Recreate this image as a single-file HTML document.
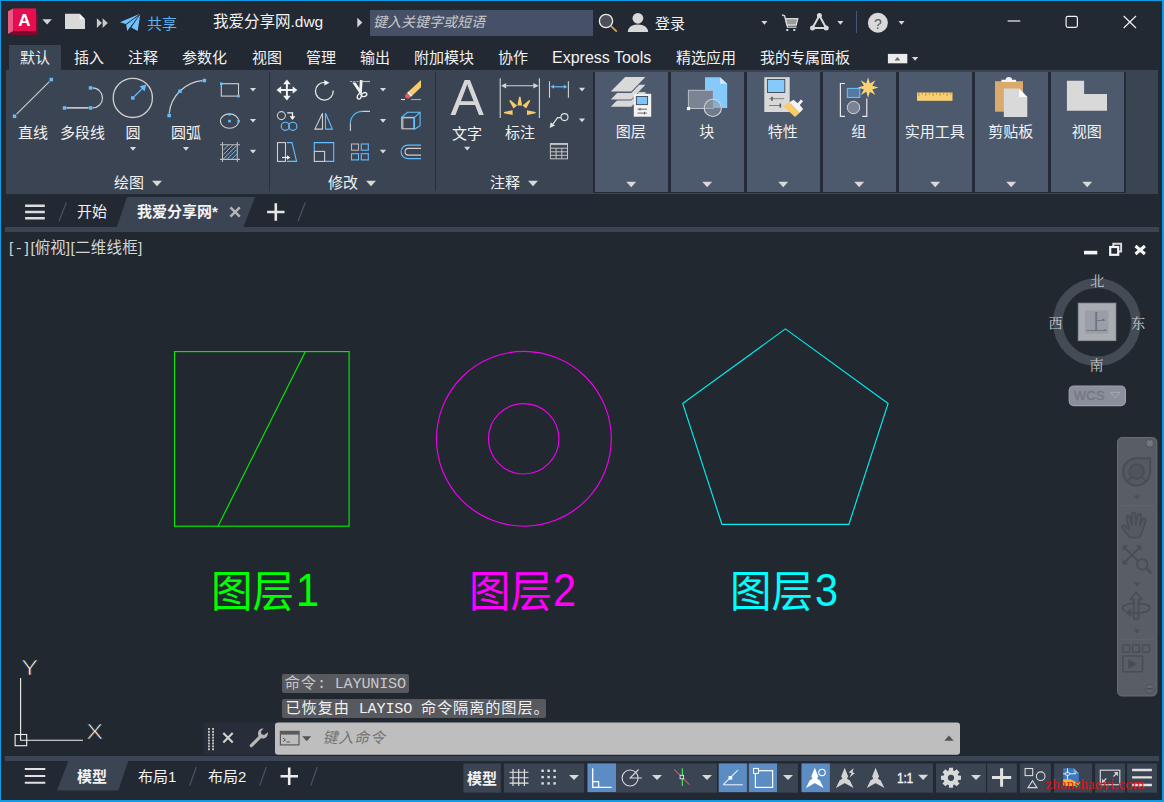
<!DOCTYPE html>
<html lang="zh-CN">
<head>
<meta charset="utf-8">
<title>我爱分享网.dwg</title>
<style>
*{box-sizing:border-box;margin:0;padding:0}
html,body{width:1164px;height:802px;overflow:hidden;background:#222933}
body{position:relative;font-family:"Liberation Sans","Noto Sans CJK SC",sans-serif;font-size:15px;color:#f2f2f2;line-height:1}
.abs{position:absolute}
.t{position:absolute;white-space:nowrap;line-height:20px;height:20px}
#frame{position:absolute;left:0;top:0;width:1164px;height:802px;border:1px solid #0f9be3;border-right-width:2px;border-bottom-width:2px;z-index:50;pointer-events:none}
#ribbon{left:6px;top:70px;width:1152px;height:124px;background:#3b4453}
#pdark{left:593px;top:72px;width:532.5px;height:120.500px;background:#252b36}
#tabact{left:9px;top:45px;width:52px;height:26px;background:#3b4453}
.cp{position:absolute;top:72px;width:73.300px;height:119.700px;background:#4d596d}
.cp .l{position:absolute;left:-1px;width:100%;top:50px;text-align:center;line-height:20px}
.sep{position:absolute;top:72px;width:1px;height:119px;background:#2a303b}
#search{left:370px;top:10px;width:223px;height:26px;background:#465066}
#draw{left:2px;top:232px;width:1161px;height:524px;background:#212830}
#strip1{left:5px;top:227px;width:1154px;height:5px;background:#3b4453}
#strip2{left:5px;top:756px;width:1154px;height:5px;background:#3b4453}
.big{top:568px;height:50px;line-height:50px;font-size:41.5px;transform:scaleY(1.03);transform-origin:0 50%}
.dig{font-family:"Liberation Sans",sans-serif;font-size:46px !important;transform:scaleX(0.9) !important;transform-origin:0 50% !important;top:565px !important}
.cjs{font-family:"Liberation Serif","Noto Serif CJK SC",serif;font-size:14px;color:#c8c8c8}
.vl{top:238px;font-size:15.500px;color:#d4d4d4}
.hl{padding:0 0 0 2.700px;background:#57595e;border-radius:2px;font-size:15.200px;letter-spacing:0.900px;overflow:hidden}
.la{letter-spacing:-0.230px}
.mono{font-family:"Liberation Mono","Noto Sans Mono CJK SC","Noto Sans CJK SC",monospace}
#svg{position:absolute;left:0;top:0;z-index:10}
.z20{z-index:20}
</style>
</head>
<body>
<!-- backgrounds -->
<div class="abs" id="tabact"></div>
<div class="abs" id="ribbon"></div>
<div class="abs" id="pdark"></div>
<div class="abs" id="search"></div>
<div class="abs" id="strip1"></div>
<div class="abs" id="draw"></div>
<div class="abs" id="strip2"></div>

<div class="sep" style="left:269px"></div><div class="sep" style="left:435px"></div>
<!-- collapsed panels -->
<div class="cp" style="left:595px"><span class="l">图层</span></div>
<div class="cp" style="left:671px"><span class="l">块</span></div>
<div class="cp" style="left:747px"><span class="l">特性</span></div>
<div class="cp" style="left:823px"><span class="l">组</span></div>
<div class="cp" style="left:899px"><span class="l">实用工具</span></div>
<div class="cp" style="left:975px"><span class="l">剪贴板</span></div>
<div class="cp" style="left:1051px"><span class="l">视图</span></div>

<!-- SVG-ICONS -->
<svg id="svg" width="1164" height="802" viewBox="0 0 1164 802">
<!-- ICONS-START -->
<!-- drawing entities -->
<g fill="none" stroke-width="1.15">
<rect x="174.5" y="351.6" width="174.6" height="174.6" stroke="#00ee00"/>
<line x1="305.4" y1="351.6" x2="218" y2="526.2" stroke="#00ee00"/>
<circle cx="523.9" cy="438.8" r="87.4" stroke="#f000f0"/>
<circle cx="523.7" cy="438.8" r="35.2" stroke="#f000f0"/>
<polygon points="785.4,328.9 888.1,403.5 848.9,524.3 721.9,524.3 682.7,403.5" stroke="#00eeee"/>
</g>
<!-- UCS icon -->
<g fill="none" stroke="#f0f0f0" stroke-width="1.1">
<path d="M20.6 678v62.3H83"/>
<rect x="15.1" y="734.5" width="11.6" height="11.2"/>
</g>
<text transform="translate(21.200 674.500) scale(1.150 1)" font-family="Liberation Sans, sans-serif" font-size="22" fill="#f0f0f0" stroke="#212830" stroke-width="0.600">Y</text>
<text transform="translate(86.300 738.700) scale(1.150 1)" font-family="Liberation Sans, sans-serif" font-size="22" fill="#f0f0f0" stroke="#212830" stroke-width="0.600">X</text>
<!-- title bar -->
<g id="logo">
<polygon points="11,31.5 38,31.5 38,13 36,13 36,29 13,31" fill="#7c0a2c"/>
<polygon points="11,30.5 38,30.5 38,35 11,35" fill="#7c0a2c"/>
<polygon points="8,11.3 13.2,8.4 13.2,31 8,34" fill="#ea5a86"/>
<rect x="13.2" y="8.4" width="22.9" height="22.6" fill="#e50e4f"/>
</g>
<polygon points="42.4,19.2 51.8,19.2 47.1,24.4" fill="#d6d6d6"/>
<path d="M65 13.7h14.6l5.4 5.6v9.8H65z" fill="#d9d9d9"/>
<path d="M79.6 13.7l5.4 5.6h-5.4z" fill="#f4f4f4"/>
<polygon points="96.9,18.2 101.9,23 96.9,27.9" fill="#c9c9c9"/>
<polygon points="102.6,18.2 107.8,23 102.6,27.9" fill="#c9c9c9"/>
<g fill="#6ec4ff">
<polygon points="119.9,22.3 140,13.8 125.8,24"/>
<polygon points="126.2,24.8 138.6,15.8 127.2,31"/>
<polygon points="140.2,14.6 137.7,30.9 131.3,27.6"/>
</g>
<polygon points="357.300,17.800 362.300,22.600 357.300,27.400" fill="#d6d6d6"/>
<circle cx="606" cy="21" r="6.6" fill="#4b5059" stroke="#ececec" stroke-width="1.3"/>
<line x1="611.3" y1="26.4" x2="616.8" y2="31.6" stroke="#d9a566" stroke-width="1.7"/>
<circle cx="637.9" cy="18.3" r="5.4" fill="#d9d9d9"/>
<path d="M627.8 32c0-4.5 4-7.6 10.1-7.6s10.2 3.100 10.200 7.600z" fill="#d9d9d9"/>
<polygon points="761.400,21 767.400,21 764.400,24.700" fill="#d8d8d8"/>
<g id="cart" fill="none" stroke="#d9d9d9" stroke-width="1.3">
<path d="M782 14.800l2.600 1 3 11.400h9"/>
<path d="M785.500 18.600h12.300l-1.600 6.400h-9.300z" fill="#9a9a9a"/>
<rect x="786.300" y="29" width="2" height="2" fill="#d9d9d9" stroke="none"/>
<rect x="793.300" y="29" width="2" height="2" fill="#d9d9d9" stroke="none"/>
</g>
<g id="adsk">
<polygon points="819.400,15.500 812.500,28 826.200,28" fill="none" stroke="#d9d9d9" stroke-width="2"/>
<circle cx="819.400" cy="15.500" r="2.500" fill="#d9d9d9"/>
<circle cx="812.500" cy="28" r="2.500" fill="#d9d9d9"/>
<circle cx="826.200" cy="28" r="2.500" fill="#d9d9d9"/>
</g>
<polygon points="837.400,21 843.400,21 840.400,24.700" fill="#d8d8d8"/>
<line x1="856.500" y1="11" x2="856.500" y2="33" stroke="#46567a" stroke-width="1"/>
<circle cx="877.900" cy="22.800" r="10" fill="#d9d9d9"/>
<polygon points="898.500,21 904.500,21 901.500,24.700" fill="#d8d8d8"/>
<g fill="none" stroke="#f0f0f0" stroke-width="1.200">
<line x1="1007.600" y1="21" x2="1020.200" y2="21"/>
<rect x="1066.100" y="16.400" width="11.300" height="11" rx="1.800"/>
<path d="M1123.700 16l12.300 12M1136 16l-12.300 12"/>
</g>
<!-- ribbon tab button -->
<rect x="888.3" y="54.3" width="18.6" height="8.6" fill="#ececec" stroke="#fff" stroke-width="0.8"/>
<polygon points="897.4,57 900.3,60.6 894.5,60.6" fill="#666"/>
<polygon points="911.9,57.0 918.3,57.0 915.1,60.8" fill="#d8d8d8"/>
<!-- draw panel -->
<g fill="none" stroke="#cfcfcf" stroke-width="1.1">
<line x1="16.6" y1="114.2" x2="49.4" y2="81.6"/>
<line x1="66.5" y1="107.9" x2="88.5" y2="107.9" stroke="#e4e4e4" stroke-width="1.4"/>
<path d="M92.5 87.9a10 10 0 0 1 0 20" stroke-width="1.2"/>
<circle cx="132.8" cy="97.9" r="19.6" stroke-width="1.3"/>
<path d="M169.2 113.5A36.65 36.65 0 0 1 202.5 80.6" stroke-width="1.2"/>
<rect x="221.3" y="83.7" width="17.2" height="12.4"/>
<ellipse cx="229.5" cy="121.1" rx="9.1" ry="7.2"/>
<path d="M222.500 142v20M237.300 142v20M220 144.800h20M220 159.400h20" stroke="#bdbdbd"/>
</g>
<path d="M223.500 150l5-5M223.500 154.500l9.500-9.500M223.500 158.800l13-13M227.500 158.800l9-9M232 158.800l4.600-4.600" stroke="#6cc2ff" stroke-width="1" fill="none"/>
<rect x="12.8" y="114.5" width="3.5" height="3.5" fill="#62beff"/>
<rect x="49.5" y="77.8" width="3.5" height="3.5" fill="#62beff"/>
<rect x="62.8" y="106.2" width="3.5" height="3.5" fill="#62beff"/>
<rect x="88.8" y="106.2" width="3.5" height="3.5" fill="#62beff"/>
<rect x="88.8" y="86.2" width="3.5" height="3.5" fill="#62beff"/>
<rect x="131.1" y="96.2" width="3.5" height="3.5" fill="#62beff"/>
<rect x="167.4" y="113.8" width="3.5" height="3.5" fill="#62beff"/>
<rect x="178.2" y="89.5" width="3.5" height="3.5" fill="#62beff"/>
<rect x="202.6" y="78.8" width="3.5" height="3.5" fill="#62beff"/>
<rect x="220.0" y="82.4" width="2.6" height="2.6" fill="#62beff"/>
<rect x="237.2" y="94.8" width="2.6" height="2.6" fill="#62beff"/>
<rect x="228.2" y="113.0" width="2.6" height="2.6" fill="#62beff"/>
<rect x="228.2" y="119.8" width="2.6" height="2.6" fill="#62beff"/>
<rect x="237.3" y="119.8" width="2.6" height="2.6" fill="#62beff"/>
<line x1="134.500" y1="96.200" x2="143" y2="87.900" stroke="#62beff" stroke-width="1.3"/>
<polygon points="146.300,84.600 144.600,91.400 139.600,86.300" fill="#62beff"/>
<polygon points="249.9,87.9 256.1,87.9 253.0,91.5" fill="#d8d8d8"/>
<polygon points="249.9,118.9 256.1,118.9 253.0,122.5" fill="#d8d8d8"/>
<polygon points="249.9,149.8 256.1,149.8 253.0,153.5" fill="#d8d8d8"/>
<polygon points="129.9,147.1 136.1,147.1 133.0,150.8" fill="#d8d8d8"/>
<polygon points="182.9,147.1 189.1,147.1 186.0,150.8" fill="#d8d8d8"/>
<polygon points="152.0,180.7 162.0,180.7 157.0,186.3" fill="#d8d8d8"/>
<polygon points="366.0,180.7 376.0,180.7 371.0,186.3" fill="#d8d8d8"/>
<polygon points="528.0,180.7 538.0,180.7 533.0,186.3" fill="#d8d8d8"/>
<!-- modify panel -->
<g fill="#f2f2f2" stroke="#f2f2f2"><path d="M286.900 82v16M278.900 90h16" stroke-width="2" fill="none"/><polygon points="286.900,79.600 290.700,84.300 283.100,84.300" stroke="none"/><polygon points="286.900,100.400 290.700,95.700 283.100,95.700" stroke="none"/><polygon points="276.500,90 281.200,86.200 281.200,93.800" stroke="none"/><polygon points="297.300,90 292.600,86.200 292.600,93.800" stroke="none"/></g>
<path d="M324.800 82.300a8.900 8.900 0 1 0 8.400 8.200" fill="none" stroke="#e2e2e2" stroke-width="1.3"/>
<polygon points="324.300,79.900 329.500,82.700 324.300,85.500" fill="#f2f2f2"/>
<path d="M350 81.500h10" stroke="#62beff" stroke-width="1.2" stroke-dasharray="2.200 1" fill="none"/>
<path d="M362.600 81.500h7.400" stroke="#bdbdbd" stroke-width="1.2" fill="none"/>
<g fill="#f2f2f2" stroke="none"><polygon points="352.300,82.400 355.700,82.400 362,92.200 359.800,93.800"/><polygon points="359.900,80 362.700,80.300 361.700,93.400 359,93"/></g>
<g fill="none" stroke="#f2f2f2" stroke-width="1.300"><ellipse cx="359.300" cy="96.400" rx="1.900" ry="2.800" transform="rotate(20 359.300 96.400)"/><ellipse cx="364.200" cy="94.600" rx="2.700" ry="1.900" transform="rotate(-20 364.200 94.600)"/></g>
<polygon points="421,80 421,87.300 412.600,95.200 408.800,91.300" fill="#f9cb6b"/>
<polygon points="408.800,91.300 412.600,95.200 410.800,96.900 407,93" fill="#f4f4f4"/>
<path d="M407 93l3.800 3.900c-1.600 1.800-3.900 2.100-5.100 0.900c-1.200-1.200-0.700-3.300 1.300-4.800z" fill="#f0565c"/>
<path d="M401 99.500h4" stroke="#e8e8e8" stroke-width="1.100"/><path d="M411 99.500h10" stroke="#62beff" stroke-width="1.100"/>
<circle cx="281.400" cy="115.600" r="4" fill="none" stroke="#cfcfcf" stroke-width="1.100"/>
<circle cx="285.300" cy="126.300" r="4.100" fill="none" stroke="#62beff" stroke-width="1.100"/><circle cx="292.800" cy="126.300" r="4.100" fill="none" stroke="#62beff" stroke-width="1.100"/>
<path d="M287.200 112.900h5.300v4" fill="none" stroke="#f2f2f2" stroke-width="1.300"/><polygon points="289.600,116.300 295.400,116.300 292.500,120" fill="#f2f2f2"/>
<polygon points="322.500,113.300 322.500,129.100 314.900,129.100" fill="none" stroke="#cfcfcf" stroke-width="1.100"/>
<polygon points="325.500,113.300 325.500,129.100 332.400,129.100" fill="none" stroke="#62beff" stroke-width="1.100"/>
<path d="M350.400 123.300a11.900 11.900 0 0 1 11.900-11.900" fill="none" stroke="#62beff" stroke-width="1.100"/>
<path d="M350.400 123.300v7.700M362.300 111.400h7.700" fill="none" stroke="#cfcfcf" stroke-width="1.100"/>
<path d="M401.500 129.300v-12l6-5h12.600v13.400l-5.600 3.600M414.500 117.300l5.600-5M401.500 117.300h13" fill="none" stroke="#62beff" stroke-width="1.100"/>
<rect x="402.800" y="117.800" width="11.200" height="11" fill="none" stroke="#cfcfcf" stroke-width="1.100"/>
<path d="M414.500 117.300v12" stroke="#62beff" stroke-width="1.100"/>
<rect x="277.500" y="142.600" width="8" height="18.800" fill="none" stroke="#cfcfcf" stroke-width="1.100"/>
<path d="M287 142.600h5l4.600 18.800h-9.600" fill="none" stroke="#62beff" stroke-width="1.100"/>
<path d="M282 157.500h6" stroke="#f2f2f2" stroke-width="1.200"/><polygon points="287,155.200 290.400,157.500 287,159.800" fill="#f2f2f2"/>
<path d="M314.300 151.400v-8.800h19.400v18.800h-9" fill="none" stroke="#62beff" stroke-width="1.100"/>
<rect x="314.300" y="151.400" width="10.300" height="10" fill="none" stroke="#cfcfcf" stroke-width="1.100"/>
<rect x="351.500" y="144" width="7" height="6.200" fill="none" stroke="#b5b5b5" stroke-width="1.100"/>
<rect x="361.3" y="144" width="7" height="6.200" fill="none" stroke="#62beff" stroke-width="1.100"/>
<rect x="351.5" y="153.7" width="7" height="6.200" fill="none" stroke="#62beff" stroke-width="1.100"/>
<rect x="361.3" y="153.7" width="7" height="6.200" fill="none" stroke="#62beff" stroke-width="1.100"/>
<path d="M421 145.100h-13.200a6.750 6.750 0 0 0 0 13.500h13.200" fill="none" stroke="#62beff" stroke-width="1.100"/>
<path d="M421 148.400h-12.600a3.350 3.350 0 0 0 0 6.700h12.600" fill="none" stroke="#cfcfcf" stroke-width="1.100"/>
<polygon points="379.9,87.9 386.1,87.9 383.0,91.5" fill="#d8d8d8"/>
<polygon points="379.9,119.1 386.1,119.1 383.0,122.8" fill="#d8d8d8"/>
<polygon points="379.9,149.8 386.1,149.8 383.0,153.5" fill="#d8d8d8"/>
<!-- annotate panel -->
<path d="M500.200 78.200v39.800M539.400 78.200v39.800" stroke="#d4d4d4" stroke-width="1.100" fill="none"/>
<path d="M503 85.700h34" stroke="#d4d4d4" stroke-width="1.100" fill="none"/>
<polygon points="501,85.700 506.200,83 506.200,88.400" fill="#d4d4d4"/><polygon points="538.600,85.700 533.400,83 533.400,88.400" fill="#d4d4d4"/>
<polygon points="504.0,111.9 504.0,113.3 512.6,115.0 512.6,110.2" fill="#f7ca69"/>
<polygon points="510.4,99.9 509.3,100.8 513.4,108.5 517.1,105.5" fill="#f7ca69"/>
<polygon points="520.5,96.8 519.1,96.8 517.4,105.4 522.2,105.4" fill="#f7ca69"/>
<polygon points="530.3,100.8 529.2,99.9 522.5,105.5 526.2,108.5" fill="#f7ca69"/>
<polygon points="535.6,113.3 535.6,111.9 527.0,110.2 527.0,115.0" fill="#f7ca69"/>
<path d="M549.500 81.300v16.500M568.400 81.300v16.500" stroke="#cfcfcf" stroke-width="1.100" fill="none"/>
<path d="M552.500 86.800h13" stroke="#62beff" stroke-width="1.200" fill="none"/>
<polygon points="550.500,86.800 554,84.800 554,88.800" fill="#62beff"/><polygon points="567.400,86.800 563.900,84.800 563.900,88.800" fill="#62beff"/>
<circle cx="564.500" cy="117.100" r="3.500" fill="none" stroke="#e2e2e2" stroke-width="1.100"/>
<path d="M561 117.600h-3.400l-5.600 7.800" fill="none" stroke="#e2e2e2" stroke-width="1.200"/>
<polygon points="549.700,128 550.600,122.300 555,125.500" fill="#e2e2e2"/>
<g fill="none" stroke="#c4c4c4" stroke-width="1"><rect x="550.400" y="143.500" width="17.100" height="15.300"/><path d="M550.400 144.600h17.100M550.400 148.200h17.100M550.400 151.800h17.100M550.400 155.300h17.100M556.100 148.200v10.600M561.800 148.200v10.600"/></g>
<polygon points="578.9,87.8 585.1,87.8 582.0,91.4" fill="#d8d8d8"/>
<polygon points="578.9,118.6 585.1,118.6 582.0,122.2" fill="#d8d8d8"/>
<polygon points="464.1,146.8 470.3,146.8 467.2,150.5" fill="#d8d8d8"/>
<!-- collapsed panel icons -->
<polygon points="626.2,181.8 636.2,181.8 631.2,187.2" fill="#d8d8d8"/>
<polygon points="702.2,181.8 712.2,181.8 707.2,187.2" fill="#d8d8d8"/>
<polygon points="778.2,181.8 788.2,181.8 783.2,187.2" fill="#d8d8d8"/>
<polygon points="854.2,181.8 864.2,181.8 859.2,187.2" fill="#d8d8d8"/>
<polygon points="930.2,181.8 940.2,181.8 935.2,187.2" fill="#d8d8d8"/>
<polygon points="1006.2,181.8 1016.2,181.8 1011.2,187.2" fill="#d8d8d8"/>
<polygon points="1082.2,181.8 1092.2,181.8 1087.2,187.2" fill="#d8d8d8"/>
<polygon points="625.100,92.1 645.400,92.1 631.300,106.8 610.800,106.8" fill="#d9d9d9"/>
<polygon points="625.100,85.9 645.400,85.9 631.300,100.6 610.800,100.6" fill="#4d596d"/>
<polygon points="625.100,84.7 645.400,84.7 631.300,99.4 610.800,99.4" fill="#d9d9d9"/>
<polygon points="625.100,78.3 645.400,78.3 631.300,93.0 610.800,93.0" fill="#4d596d"/>
<polygon points="625.100,76.9 645.400,76.9 631.300,91.6 610.800,91.6" fill="#d9d9d9"/>
<rect x="638.500" y="92" width="7" height="3" fill="#cfcfcf"/>
<rect x="633.800" y="93.800" width="17.400" height="22.900" fill="#f2f2f2"/>
<rect x="636.400" y="96.500" width="11.200" height="8.100" fill="#7cc6fb" stroke="#3d4757" stroke-width="0.900"/>
<path d="M637.500 109.200h9.500M637.500 113.100h9.500M640 107.900v2.600M644.500 111.800v2.600" stroke="#555" stroke-width="0.900" fill="none"/>
<path d="M705 77.200h15l7.200 6.500v24.200h-22.200z" fill="#86c9fb"/><path d="M720 77.200l7.200 6.500h-7.200z" fill="#cbe8fd"/>
<rect x="688.400" y="90.300" width="25" height="18.200" fill="#7a8495" stroke="#b9bec7" stroke-width="1"/>
<circle cx="712.800" cy="107.900" r="8.600" fill="#8d95a3" fill-opacity="0.550" stroke="#d4d4d4" stroke-width="1.100"/>
<rect x="686.900" y="107" width="3.200" height="3.200" fill="#f4f4f4"/>
<rect x="764.300" y="77.200" width="25.400" height="34.800" fill="#d9d9d9"/>
<rect x="767.400" y="79.500" width="17.400" height="13" fill="#86c9fb" stroke="#3d4757" stroke-width="0.900"/>
<path d="M769 98.700h15M769 105.500h12" stroke="#777" stroke-width="0.900" fill="none"/><path d="M772 96.700v4M780.300 103.500v4" stroke="#555" stroke-width="1.600" fill="none"/>
<polygon points="789.100,102.600 793.700,99.800 797.600,103.300 800.800,99.400 803.100,101.300 799.800,105 803.100,108.900 799.500,113.100" fill="#f4f4f4"/>
<polygon points="783.200,105.900 789.100,102.600 799.500,113.100 795,117" fill="#f9cb6b"/>
<path d="M845 83.500h-4.600v32.900h4.600M862.200 116.400h4.600v-18" fill="none" stroke="#e8e8e8" stroke-width="1.200"/>
<rect x="847.300" y="88.400" width="12.500" height="9" fill="#56799f" stroke="#6fc2ff" stroke-width="1"/>
<circle cx="853.500" cy="107.500" r="6.200" fill="#7a8495" stroke="#d4d4d4" stroke-width="1"/>
<polygon points="868.1,77.3 869.9,83.4 875.4,80.3 872.3,85.8 878.4,87.6 872.3,89.4 875.4,94.9 869.9,91.8 868.1,97.9 866.3,91.8 860.8,94.9 863.9,89.4 857.8,87.6 863.9,85.8 860.8,80.3 866.3,83.4" fill="#fbd277"/>
<rect x="917" y="92.500" width="35.500" height="8.300" fill="#f9cf73"/>
<path d="M918.8 92.500v3.6M922.3 92.500v2.2M925.9 92.500v3.6M929.4 92.500v2.2M933.0 92.500v3.6M936.5 92.500v2.2M940.1 92.500v3.6M943.6 92.500v2.2M947.2 92.500v3.6M950.8 92.500v2.2" stroke="#b98d3c" stroke-width="0.900" fill="none"/>
<rect x="995" y="81.200" width="28" height="30.500" fill="#d9aa6c"/>
<path d="M1001.400 82.100v-2.400h4.200a3.200 2.600 0 0 1 6.400 0h4.100v2.400z" fill="#f4f4f4"/>
<path d="M1003.800 88.600h15.300l8.200 8.400v20h-23.500z" fill="#d9d9d9"/><path d="M1019.100 88.600l8.200 8.400h-8.200z" fill="#fafafa"/>
<path d="M1066.900 80.800h17.200v13.100h22.900v16.800h-40.100z" fill="#d9d9d9"/>
<!-- file tabs -->
<polygon points="127,197 255.100,197 243.200,227.500 116.700,227.500" fill="#3b4453"/>
<path d="M25.100 205.700h19.700M25.100 212h19.700M25.100 218.300h19.700" stroke="#dcdcdc" stroke-width="2.400" fill="none"/>
<path d="M66.300 202.500l-7.300 18.800M305.300 202.500l-7.300 18.800" stroke="#4a5364" stroke-width="1.200" fill="none"/>
<path d="M230.400 207.300l9.400 9.400M239.800 207.300l-9.400 9.400" stroke="#b4b6ba" stroke-width="2.400" fill="none"/>
<path d="M267.100 212h17.400M275.800 203.300v17.400" stroke="#e6e6e6" stroke-width="2.600" fill="none"/>
<!-- layout tabs -->
<polygon points="68.600,760.500 128.500,760.500 118.300,790.600 57,790.600" fill="#3b4453"/>
<path d="M24.800 769h20.500M24.800 776h20.500M24.800 782.800h20.500" stroke="#e0e0e0" stroke-width="2.100" fill="none"/>
<path d="M196.300 767l-6.500 18.500M266.300 767l-6.500 18.500M317.300 767l-6.500 18.500" stroke="#4a5364" stroke-width="1.200" fill="none"/>
<path d="M280.500 776.200h17.500M289.200 767.500v17.500" stroke="#ececec" stroke-width="2.600" fill="none"/>
<!-- command line -->
<path d="M206.500 722.400h70v32.400h-70a3 3 0 0 1-3-3v-26.400a3 3 0 0 1 3-3z" fill="#272e3a"/>
<path d="M278 722.400h679a3 3 0 0 1 3 3v26.400a3 3 0 0 1-3 3h-679a3 3 0 0 1-3-3v-26.400a3 3 0 0 1 3-3z" fill="#bebebf"/>
<g fill="#c4c4c4"><rect x="208" y="728.0" width="1.900" height="1.900"/><rect x="208" y="730.9" width="1.900" height="1.900"/><rect x="208" y="733.8" width="1.900" height="1.900"/><rect x="208" y="736.7" width="1.900" height="1.900"/><rect x="208" y="739.6" width="1.900" height="1.900"/><rect x="208" y="742.5" width="1.900" height="1.900"/><rect x="208" y="745.4" width="1.900" height="1.900"/><rect x="208" y="748.3" width="1.900" height="1.900"/><rect x="212.1" y="728.0" width="1.900" height="1.900"/><rect x="212.1" y="730.9" width="1.900" height="1.900"/><rect x="212.1" y="733.8" width="1.900" height="1.900"/><rect x="212.1" y="736.7" width="1.900" height="1.900"/><rect x="212.1" y="739.6" width="1.900" height="1.900"/><rect x="212.1" y="742.5" width="1.900" height="1.900"/><rect x="212.1" y="745.4" width="1.900" height="1.900"/><rect x="212.1" y="748.3" width="1.900" height="1.900"/></g>
<path d="M223.300 733l9.400 9.400M232.700 733l-9.400 9.400" stroke="#d2d2d2" stroke-width="2.100" fill="none"/>
<path d="M251.300 745.600l9.500-9.400" stroke="#b8b8b8" stroke-width="3.200" stroke-linecap="round" fill="none"/>
<path d="M267.800 732.200a5 5 0 1 1-4.300-3.700l-2.700 3.100l0.700 2.700l2.700 0.700z" fill="#b8b8b8"/>
<rect x="280.400" y="731.400" width="18.600" height="13.500" fill="none" stroke="#5a5a5a" stroke-width="1.200"/><rect x="280" y="731" width="19.400" height="3.600" fill="#5a5a5a"/>
<path d="M283 738l2.500 1.800l-2.500 1.800M286.500 742h3.500" stroke="#5a5a5a" stroke-width="1" fill="none"/>
<polygon points="302.2,736.2 311.2,736.2 306.7,741.2" fill="#555"/>
<polygon points="944.300,740.800 953.700,740.800 949,735.600" fill="#555"/>
<!-- status bar -->
<rect x="463.4" y="763.500" width="37.4" height="29.200" fill="#3b4453"/>
<rect x="503.9" y="763.500" width="80.4" height="29.200" fill="#3b4453"/>
<rect x="587.5" y="763.500" width="129.5" height="29.200" fill="#3b4453"/>
<rect x="718.7" y="763.500" width="79.3" height="29.200" fill="#3b4453"/>
<rect x="801.5" y="763.500" width="131.5" height="29.200" fill="#3b4453"/>
<rect x="936" y="763.500" width="49.9" height="29.200" fill="#3b4453"/>
<rect x="987.2" y="763.500" width="29.6" height="29.200" fill="#3b4453"/>
<rect x="1020" y="763.500" width="30.9" height="29.200" fill="#3b4453"/>
<rect x="1054.1" y="763.500" width="38.1" height="29.200" fill="#3b4453"/>
<rect x="1095.1" y="763.500" width="29.9" height="29.200" fill="#3b4453"/>
<rect x="1127.1" y="763.500" width="29.9" height="29.200" fill="#3b4453"/>
<rect x="587.5" y="763.500" width="28.5" height="28.500" fill="#5b8dc4"/>
<rect x="718.7" y="763.500" width="28.2" height="28.500" fill="#5b8dc4"/>
<rect x="749" y="763.500" width="28.0" height="28.500" fill="#5b8dc4"/>
<rect x="801.5" y="763.500" width="28.4" height="28.500" fill="#5b8dc4"/>
<path d="M513 769v17M518.700 769v17M524.400 769v17M509.500 772.300h19M509.500 777.700h19M509.500 783.100h19" stroke="#e6e6e6" stroke-width="1.100" fill="none"/>
<g fill="#e0e0e0"><rect x="541.4" y="769.6" width="2.400" height="2.400"/><rect x="541.4" y="775.9" width="2.400" height="2.400"/><rect x="541.4" y="782.2" width="2.400" height="2.400"/><rect x="547.4" y="769.6" width="2.400" height="2.400"/><rect x="547.4" y="775.9" width="2.400" height="2.400"/><rect x="547.4" y="782.2" width="2.400" height="2.400"/><rect x="553.4" y="769.6" width="2.400" height="2.400"/><rect x="553.4" y="775.9" width="2.400" height="2.400"/><rect x="553.4" y="782.2" width="2.400" height="2.400"/></g>
<polygon points="569.0,774.9 579.0,774.9 574.0,780.1" fill="#d8d8d8"/>
<path d="M592.700 768.200v19.200h19M592.700 781.600h5.900v5.800" stroke="#fff" stroke-width="1.300" fill="none"/>
<circle cx="630.100" cy="778" r="8" fill="none" stroke="#dadada" stroke-width="1.100"/><path d="M638.600 769.500l-8.500 8.500h11.800" fill="none" stroke="#dadada" stroke-width="1.100"/>
<polygon points="652.0,774.9 662.0,774.9 657.0,780.1" fill="#d8d8d8"/>
<path d="M674.200 769.400l15.200 15.300" stroke="#d45c5c" stroke-width="1.100"/><path d="M682.400 768.200v17.800" stroke="#4ddb6b" stroke-width="1.200"/><rect x="680.100" y="775.300" width="3.500" height="3.500" fill="#3b4453" stroke="#e6e6e6" stroke-width="0.900"/>
<polygon points="702.0,774.9 712.0,774.9 707.0,780.1" fill="#d8d8d8"/>
<path d="M723.200 784.700h19.700" stroke="#c5d6ea" stroke-width="1.400"/><path d="M723.200 784.700l14.700-14.500" stroke="#e8eef6" stroke-width="1.100"/><rect x="728.600" y="776" width="3.600" height="3.600" fill="#fff"/>
<rect x="755.400" y="770.700" width="17.200" height="16.700" fill="none" stroke="#fff" stroke-width="1.200"/><rect x="753.500" y="768.400" width="5" height="5" fill="#5b8dc4" stroke="#fff" stroke-width="1"/>
<polygon points="783.0,774.9 793.0,774.9 788.0,780.1" fill="#d8d8d8"/>
<path d="M814.8 767.8 L818.3 776.4 L817.0 778.6 L820.0 780.6 L823.6 788 L816.4 783.9 Q814.8 782.5 813.2 783.9 L806.0 788 L809.6 780.6 L812.6 778.6 L811.3 776.4 Z" fill="#fff"/>
<circle cx="822" cy="772.400" r="3.200" fill="none" stroke="#fff" stroke-width="1.100"/>
<path d="M844.7 767.8 L848.2 776.4 L846.9 778.6 L849.9 780.6 L853.5 788 L846.3 783.9 Q844.7 782.5 843.1 783.9 L835.9 788 L839.5 780.6 L842.5 778.6 L841.2 776.4 Z" fill="#d4d4d4"/>
<polygon points="853.700,768.200 848.700,772.300 851.600,773.300 849.400,777.600 854.900,773.300 852.500,772.300" fill="#d4d4d4"/>
<path d="M875.6 767.8 L879.1 776.4 L877.8 778.6 L880.8 780.6 L884.4 788 L877.2 783.9 Q875.6 782.5 874.0 783.9 L866.8 788 L870.4 780.6 L873.4 778.6 L872.1 776.4 Z" fill="#d4d4d4"/>
<polygon points="918.1,774.8 928.1,774.8 923.1,780.0" fill="#d8d8d8"/>
<path d="M961.0,775.8 L961.0,779.8 L958.3,780.0 L957.7,781.3 L959.5,783.4 L956.6,786.3 L954.5,784.5 L953.2,785.1 L953.0,787.8 L949.0,787.8 L948.8,785.1 L947.5,784.5 L945.4,786.3 L942.5,783.4 L944.3,781.3 L943.7,780.0 L941.0,779.8 L941.0,775.8 L943.7,775.6 L944.3,774.3 L942.5,772.2 L945.4,769.3 L947.5,771.1 L948.8,770.5 L949.0,767.8 L953.0,767.8 L953.2,770.5 L954.5,771.1 L956.6,769.3 L959.5,772.2 L957.7,774.3 L958.3,775.6Z M954.1 777.8a3.100 3.100 0 1 0 -6.200 0a3.100 3.100 0 1 0 6.200 0z" fill="#d9d9d9" fill-rule="evenodd"/>
<polygon points="971.0,774.9 981.0,774.9 976.0,780.1" fill="#d8d8d8"/>
<path d="M992 777.400h19.200M1001.600 768.200v18.500" stroke="#e2e2e2" stroke-width="3" fill="none"/>
<g fill="none" stroke="#dadada" stroke-width="1.100"><rect x="1025.100" y="768.500" width="7.600" height="7.100"/><circle cx="1040.700" cy="776.200" r="4.300"/><polygon points="1032.500,780.800 1037,787.600 1028,787.600"/></g>
<path d="M1063.200 768.300h10.500l5.200 5v12.800h-15.700z" fill="#3b79c1"/><path d="M1073.700 768.300l5.200 5h-5.200z" fill="#86aedb"/>
<polygon points="1063.200,779.300 1070.500,779.300 1078.900,783.400 1078.900,786.100 1063.200,786.100" fill="#f6b52c"/>
<path d="M1067.500 768.300v11M1063.200 773.800h12.800" stroke="#fff" stroke-width="0.900" fill="none"/><rect x="1065.600" y="772.400" width="3.800" height="2.800" rx="0.800" fill="#3b79c1" stroke="#fff" stroke-width="0.900"/>
<path d="M1074.800 784.800l1.800 1.800l3.400-4.600" stroke="#3bd070" stroke-width="1.300" fill="none"/>
<rect x="1100.300" y="770.200" width="19.500" height="14.500" fill="none" stroke="#d2d2d2" stroke-width="1.200"/>
<path d="M1113.500 776.500l4-4M1106.300 778.500l-4 4" stroke="#d2d2d2" stroke-width="1.200" fill="none"/><polygon points="1113.800,772 1118,772 1118,776.200" fill="#d2d2d2"/><polygon points="1102,778.700 1102,783 1106.200,783" fill="#d2d2d2"/>
<path d="M1132.100 770h19.800M1132.100 777.400h19.800M1132.100 785h19.800" stroke="#e2e2e2" stroke-width="2.300" fill="none"/>
<!-- viewport controls -->
<rect x="1084" y="250.800" width="13.300" height="3.600" fill="#f4f4f4"/>
<path d="M1113.300 246v-2.200h7.800v7.800h-2.300" fill="none" stroke="#d8d8d8" stroke-width="2"/><rect x="1110.200" y="247" width="8" height="7.800" fill="none" stroke="#f4f4f4" stroke-width="2.200"/>
<path d="M1135.500 246l9.400 8M1144.900 246l-9.400 8" stroke="#f4f4f4" stroke-width="3" fill="none"/>
<!-- viewcube -->
<circle cx="1096.900" cy="322.200" r="39.100" fill="none" stroke="#454b54" stroke-width="9.600"/>
<rect x="1078.200" y="303.100" width="37.700" height="37.600" fill="#a9acb1" stroke="#8e9299" stroke-width="0.800"/>
<rect x="1084.900" y="310.300" width="23.600" height="23.500" fill="#9a9ea8"/>
<rect x="1069.200" y="386" width="56.200" height="19.600" rx="4.500" fill="#8b8e9b" stroke="#9da0ad" stroke-width="1.200"/>
<polygon points="1110.600,392.300 1120,392.300 1115.300,398" fill="#8b8e9b" stroke="#a6a9b6" stroke-width="1"/>
<!-- navbar -->
<rect x="1117.500" y="437.500" width="39.400" height="258.500" rx="4.500" fill="#595e66" stroke="#686d75" stroke-width="1"/>
<circle cx="1149.900" cy="443.200" r="4.300" fill="#676c74" stroke="#494e56" stroke-width="0.800"/><path d="M1147.800 441.100l4.200 4.200M1152 441.100l-4.200 4.200" stroke="#7b8088" stroke-width="1.300"/>
<path d="M1136.600 458.200h13.600v13.400a13.600 13.600 0 1 1 -13.600 -13.400z" fill="#555a62" stroke="#494e56" stroke-width="2"/><circle cx="1136.600" cy="471.600" r="7.300" fill="#50555d" stroke="#494e56" stroke-width="2"/><path d="M1131.500 477l-4.300 4.600M1141.700 477l4.300 4.600" stroke="#494e56" stroke-width="1.600"/>
<polygon points="1133.5,495.4 1140.5,495.4 1137.0,499.2" fill="#494e56"/>
<path d="M1119.500 505.500h35M1119.500 639.500h35" stroke="#5f646c" stroke-width="1"/>
<path d="M1130 537.500c-2.500-2.500-5.500-6.500-7.500-9.500c-1.200-2 1-3.600 2.800-2l3.700 3.500l-2.300-11.500c-0.500-2.600 2.700-3.300 3.400-0.800l2 8l-0.300-11c0-2.600 3.400-2.600 3.500 0l0.600 10.600l1.800-9.600c0.500-2.500 3.700-1.900 3.400 0.600l-1.300 10l2.600-6.300c0.900-2.200 3.800-1.100 3.100 1.200l-2.800 9.500c-0.700 3.500-1.800 5.500-3.700 7.300z" fill="#555a62" stroke="#494e56" stroke-width="1.700" stroke-linejoin="round"/>
<path d="M1123.500 546.500l16 16M1140.500 546.500l-17 17" stroke="#494e56" stroke-width="1.800" fill="none"/><path d="M1122.500 545.500h5.500l-5.500 5.500zM1141.500 545.500h-5.500l5.500 5.500zM1122.500 564.500h5.500l-5.500-5.500z" fill="#494e56"/>
<circle cx="1142.300" cy="564.400" r="5.300" fill="#585d65" stroke="#494e56" stroke-width="1.800"/><path d="M1146.300 568.400l4.200 4.200" stroke="#494e56" stroke-width="2.600" stroke-linecap="round"/>
<polygon points="1133.5,582.6 1140.5,582.6 1137.0,586.4" fill="#494e56"/>
<path d="M1133.800 618.800v-19.500h-3.400l5.800-7l5.800 7h-3.400v19.500z" fill="#585d65" stroke="#494e56" stroke-width="1.700" stroke-linejoin="round"/>
<path d="M1139 603.300c6.500 0.500 11 2.300 11 4.700c0 3-6.500 5.200-14 5.200c-3 0-5.500-0.300-7.500-0.800M1133 603.300c-6.300 0.600-10.500 2.400-10.500 4.700c0 1.200 1 2.300 3 3.200" fill="none" stroke="#494e56" stroke-width="1.700"/><polygon points="1125.300,612.800 1131.300,608.300 1131.300,617" fill="#494e56"/>
<polygon points="1133.5,629.4 1140.5,629.4 1137.0,633.2" fill="#494e56"/>
<rect x="1122.8" y="645" width="7" height="7.300" rx="1" fill="none" stroke="#494e56" stroke-width="1.400"/>
<rect x="1132.6" y="645" width="7" height="7.300" rx="1" fill="none" stroke="#494e56" stroke-width="1.400"/>
<rect x="1142.6" y="645" width="7" height="7.300" rx="1" fill="none" stroke="#494e56" stroke-width="1.400"/>
<rect x="1122.800" y="656" width="19.800" height="15.800" rx="1" fill="none" stroke="#494e56" stroke-width="1.600"/><polygon points="1128.300,659 1128.300,669 1137,664" fill="#494e56"/>
<circle cx="1149.900" cy="688.800" r="4.300" fill="#62676f" stroke="#494e56" stroke-width="0.800"/><path d="M1147 688.800h5.800" stroke="#494e56" stroke-width="1.600"/>
<!-- ICONS-END -->
</svg>

<!-- TEXT -->
<div id="texts" style="position:absolute;left:0;top:0;z-index:20">
<!-- TEXT-START -->
<span class="t" style="left:147px;top:13.500px;color:#5fb2ee">共享</span>
<span class="t" style="left:213px;top:12px;font-size:15.5px">我爱分享网.dwg</span>
<span class="t" style="left:373px;top:12px;font-style:italic;color:#c6c8cc;font-size:14px">键入关键字或短语</span>
<span class="t" style="left:655px;top:13.500px">登录</span>

<span class="t" style="left:20px;top:48px">默认</span>
<span class="t" style="left:74px;top:48px">插入</span>
<span class="t" style="left:128px;top:48px">注释</span>
<span class="t" style="left:182px;top:48px">参数化</span>
<span class="t" style="left:252px;top:48px">视图</span>
<span class="t" style="left:306px;top:48px">管理</span>
<span class="t" style="left:360px;top:48px">输出</span>
<span class="t" style="left:414px;top:48px">附加模块</span>
<span class="t" style="left:498px;top:48px">协作</span>
<span class="t" style="left:552px;top:48px;font-size:16px">Express Tools</span>
<span class="t" style="left:676px;top:48px">精选应用</span>
<span class="t" style="left:760px;top:48px">我的专属面板</span>

<span class="t" style="left:18px;top:123px">直线</span>
<span class="t" style="left:60px;top:123px">多段线</span>
<span class="t" style="left:125.5px;top:123px">圆</span>
<span class="t" style="left:171px;top:123px">圆弧</span>
<span class="t" style="left:114px;top:173px">绘图</span>
<span class="t" style="left:328px;top:173px">修改</span>
<span class="t" style="left:490px;top:173px">注释</span>
<span class="t" style="left:452px;top:124px">文字</span>
<span class="t" style="left:505px;top:123px">标注</span>

<span class="t" style="left:77px;top:202px">开始</span>
<span class="t" style="left:137px;top:202px;font-weight:bold">我爱分享网*</span>
<span class="t vl" style="left:9px;letter-spacing:3px">[-]</span><span class="t vl" style="left:30.500px">[俯视]</span><span class="t vl" style="left:70.500px;letter-spacing:0.250px">[二维线框]</span>

<span class="t" style="left:77px;top:767px;font-weight:bold">模型</span>
<span class="t" style="left:138px;top:767px">布局1</span>
<span class="t" style="left:208px;top:767px">布局2</span>
<span class="t" style="left:467px;top:769px;font-weight:bold">模型</span>
<span class="t" style="left:896.500px;top:768px;letter-spacing:-0.300px;transform:scaleX(0.780);transform-origin:0 50%;font-size:15.500px;-webkit-text-stroke:0.400px #f2f2f2">1:1</span>

<span class="t mono hl" style="left:282.100px;top:674.400px;width:126.700px;height:18.600px;line-height:20.600px;color:#c8c8c8">命令<span class="la">: LAYUNISO</span></span>
<span class="t mono hl" style="left:282.100px;top:699px;width:263.600px;height:19px;line-height:21px;padding-left:3.400px;color:#f0f0f0">已恢复由<span class="la"> LAYISO </span>命令隔离的图层。</span>
<span class="t" style="left:322.500px;top:728px;font-style:italic;color:#747474;letter-spacing:0.800px">键入命令</span>
<span class="t big" style="left:211px;color:#00ff00">图层</span><span class="t big dig" style="left:296px;color:#00ff00">1</span>
<span class="t big" style="left:469px;color:#ff00ff">图层</span><span class="t big dig" style="left:553px;color:#ff00ff">2</span>
<span class="t big" style="left:730px;color:#00ffff">图层</span><span class="t big dig" style="left:815px;color:#00ffff">3</span>
<span class="t" style="left:18.300px;top:11px;font-weight:bold;font-size:17px;color:#fff">A</span>
<span class="t" style="left:874.100px;top:14px;font-size:14px;color:#5a5a5a">?</span>
<span class="t" style="left:450.600px;top:68px;height:60px;line-height:60px;font-size:50px;color:#d6d6d6">A</span>
<span class="t" style="left:1045.500px;top:774px;font-family:'Liberation Serif',serif;font-size:15px;color:#d81818;letter-spacing:0.150px">zhanshaoyi.com</span>
<span class="t cjs" style="left:1090.300px;top:272.300px">北</span>
<span class="t cjs" style="left:1089.600px;top:356px">南</span>
<span class="t cjs" style="left:1048.400px;top:313.600px">西</span>
<span class="t cjs" style="left:1131.200px;top:313.600px">东</span>
<span class="t cjs" style="left:1085.700px;top:311px;font-size:22px;color:#6c7079;height:24px;line-height:24px">上</span>
<span class="t" style="left:1073.700px;top:386px;font-size:13px;color:#737682;letter-spacing:0.300px;-webkit-text-stroke:0.300px #737682">WCS</span>
<!-- TEXT-END -->
</div>

<div id="frame"></div>
</body>
</html>
